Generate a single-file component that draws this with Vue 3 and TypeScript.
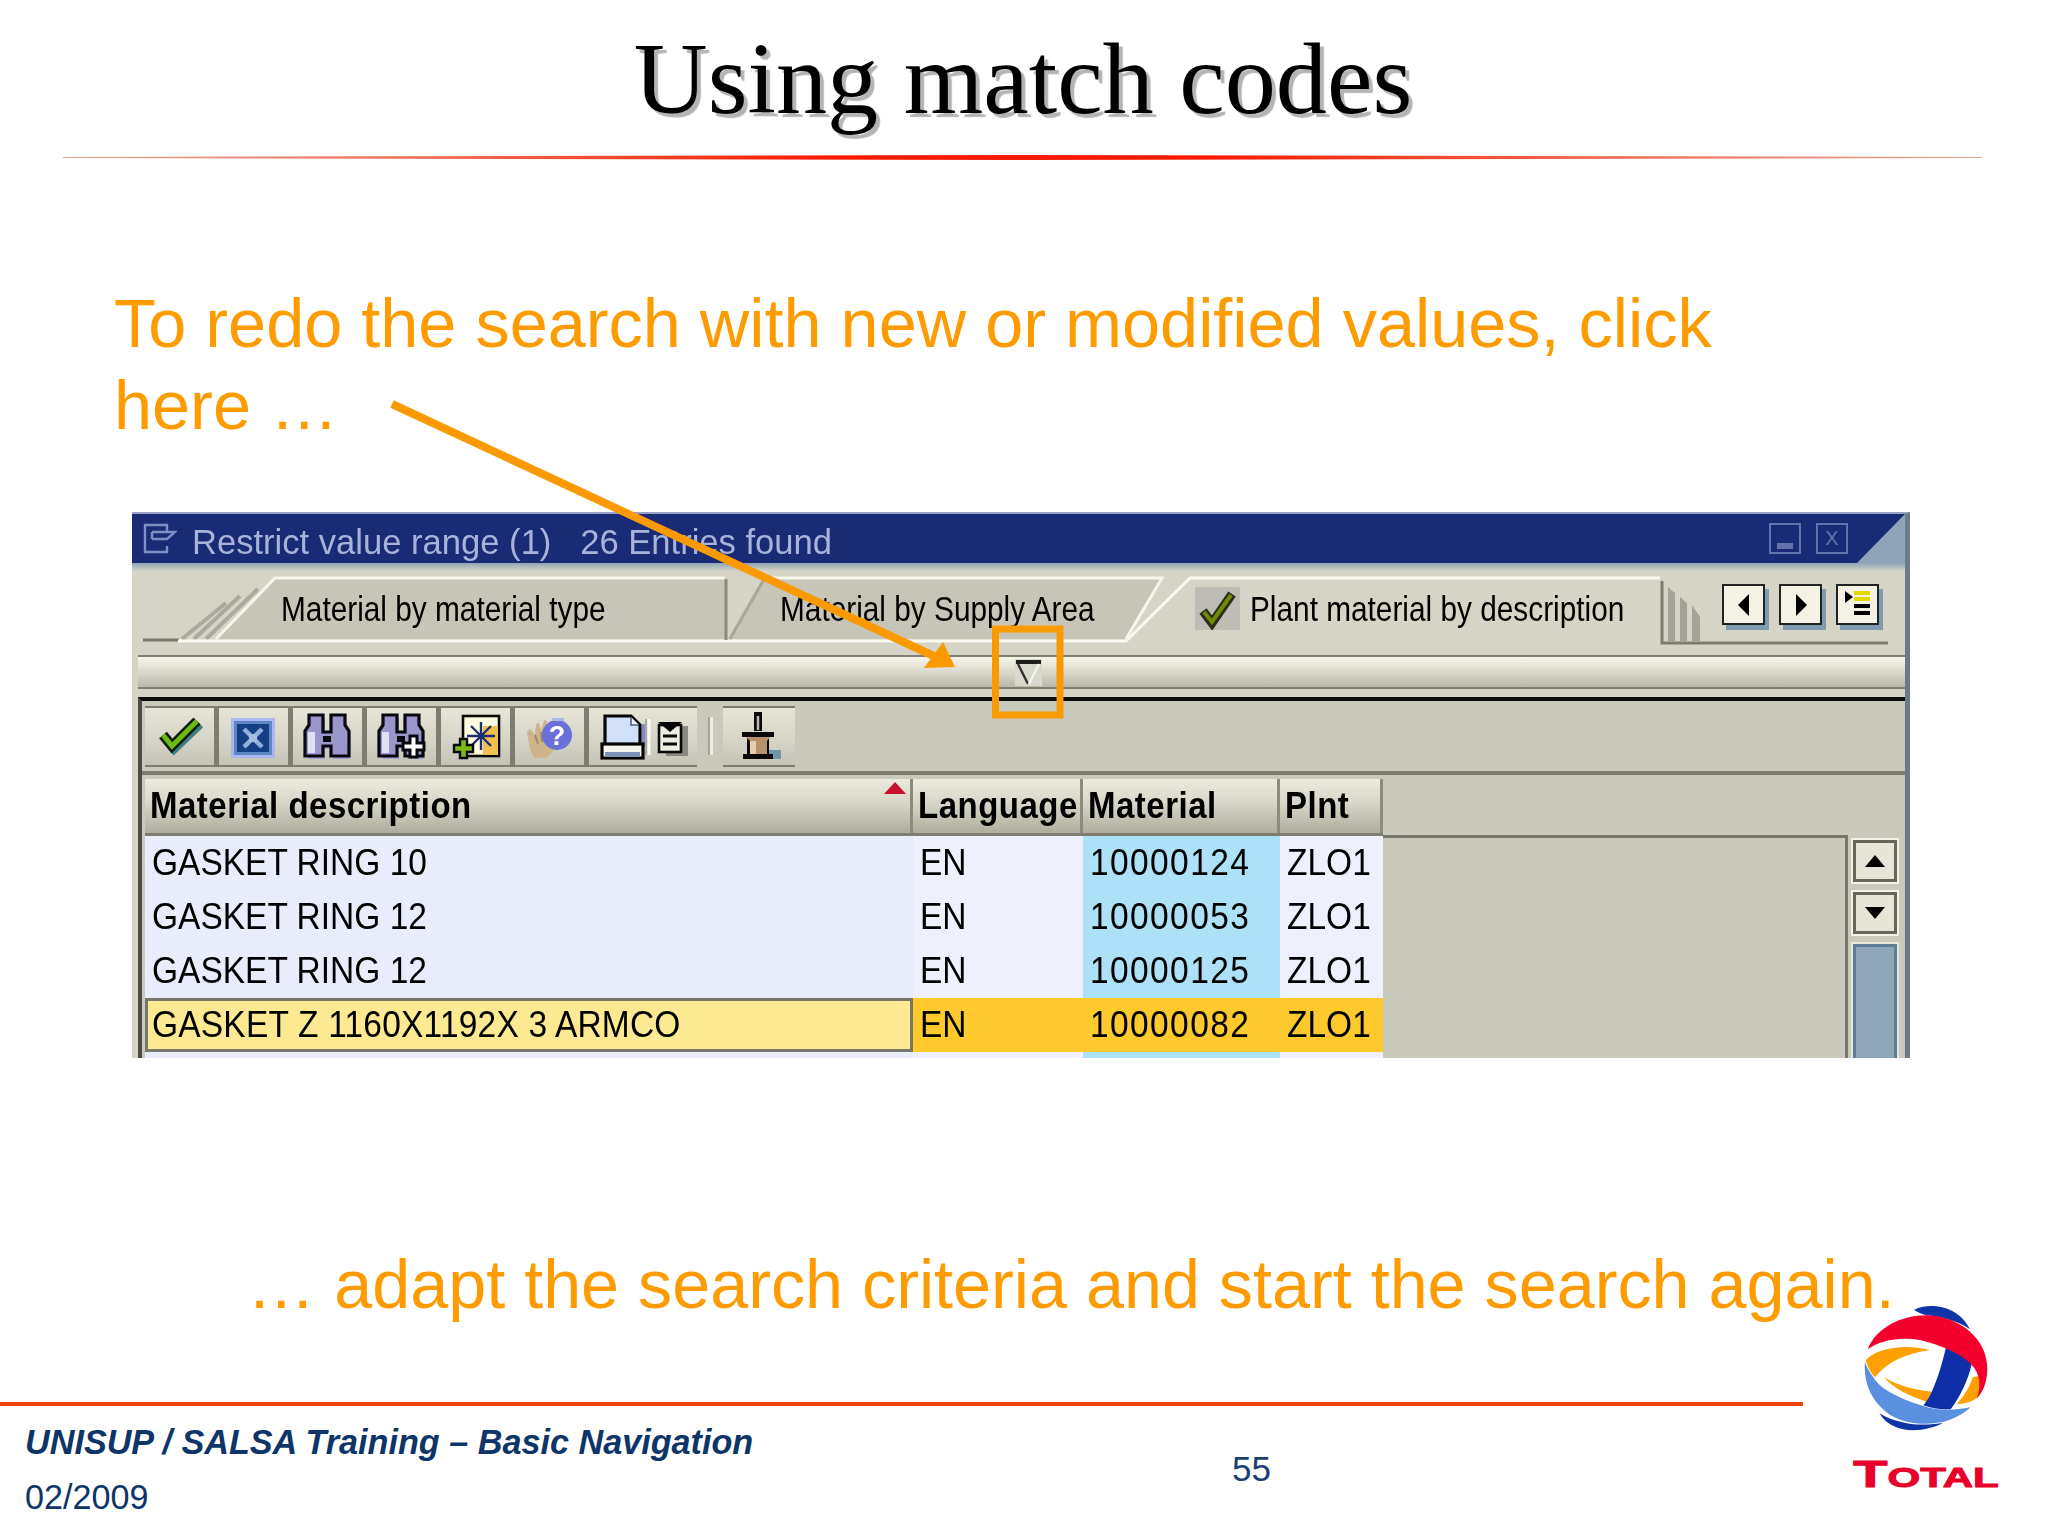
<script setup lang="ts">
interface Row {
  description: string
  language: string
  material: string
  plant: string
  selected?: boolean
}

const rows: Row[] = [
  { description: 'GASKET RING 10', language: 'EN', material: '10000124', plant: 'ZLO1' },
  { description: 'GASKET RING 12', language: 'EN', material: '10000053', plant: 'ZLO1' },
  { description: 'GASKET RING 12', language: 'EN', material: '10000125', plant: 'ZLO1' },
  { description: 'GASKET Z 1160X1192X 3 ARMCO', language: 'EN', material: '10000082', plant: 'ZLO1', selected: true },
  { description: '', language: '', material: '', plant: '' }
]
</script>

<template>
  <div class="page">
    <header class="head">
      <h1 class="title">Using match codes</h1>
      <div class="rule" />
    </header>

    <p class="lead">To redo the search with new or modified values, click<br />here …</p>

    <section class="sap">
      <div class="titlebar">
        <svg class="title-icon" width="34" height="31" viewBox="0 0 34 31">
          <path d="M24 9V2H2v27h22v-6M9 9h23l-8 7H9M9 16v-7" fill="none" stroke="#7f8fc4" stroke-width="2.4" />
        </svg>
        <span class="title-text">Restrict value range (1)&nbsp;&nbsp; 26 Entries found</span>
        <span class="win-btn"><i class="win-min" /></span>
        <span class="win-btn win-close">X</span>
      </div>

      <div class="tabs">
        <svg class="tabs-art" width="1773" height="92" viewBox="132 564 1773 92">
          <path d="M143 641h36" stroke="#77776b" stroke-width="3" />
          <g stroke="#a9a99d" stroke-width="4">
            <path d="M182 640l44-36" />
            <path d="M194 640l46-43" />
            <path d="M206 640l52-50" />
          </g>
          <path d="M216 640l59-61h450v61z" fill="#c6c5b7" />
          <path d="M728 640l35-61h399l-36 61z" fill="#c6c5b7" />
          <path d="M178 642h948l64-63h470" fill="none" stroke="#fafaf2" stroke-width="3" />
          <path d="M216 640l59-61h450M763 579h399l-36 61" fill="none" stroke="#f5f5ec" stroke-width="3" />
          <path d="M726 580v61" stroke="#8a8a7e" stroke-width="3" />
          <path d="M730 640l33-58" stroke="#a7a79b" stroke-width="3" />
          <path d="M1662 582v62h226" fill="none" stroke="#7c7c70" stroke-width="3" />
          <g fill="#a3a397">
            <path d="M1668 588l7 6v48h-7z" />
            <path d="M1680 598l7 6v38h-7z" />
            <path d="M1692 606l8 12v24h-8z" />
          </g>
        </svg>
        <div class="tab tab-first"><span class="tab-label">Material by material type</span></div>
        <div class="tab tab-second"><span class="tab-label">Material by Supply Area</span></div>
        <div class="tab tab-active">
          <svg class="tab-check" width="45" height="43" viewBox="0 0 45 43">
            <rect width="45" height="43" fill="#bdbdb6" />
            <path d="M8 24l9 12L37 7" fill="none" stroke="#2c2c18" stroke-width="9" />
            <path d="M9 25l8 10L36 8" fill="none" stroke="#6f8a06" stroke-width="4" />
          </svg>
          <span class="tab-label">Plant material by description</span>
        </div>
        <div class="tab-nav">
          <span class="nav-btn">
            <svg width="16" height="24" viewBox="0 0 16 24"><path d="M13 1v22L2 12z" /></svg>
          </span>
          <span class="nav-btn">
            <svg width="16" height="24" viewBox="0 0 16 24"><path d="M3 1v22l11-11z" /></svg>
          </span>
          <span class="nav-btn">
            <svg width="32" height="36" viewBox="0 0 32 36">
              <path d="M3 4l8 6-8 6z" />
              <rect x="12" y="4" width="16" height="4" fill="#e7d800" />
              <rect x="12" y="10" width="16" height="4" fill="#e7d800" />
              <rect x="12" y="17" width="16" height="4" />
              <rect x="12" y="24" width="16" height="4" />
            </svg>
          </span>
        </div>
      </div>

      <div class="filter-strip">
        <svg width="27" height="27" viewBox="0 0 27 27">
          <rect width="27" height="27" fill="#d8d8cc" />
          <path d="M1 3h25" stroke="#1d1d1a" stroke-width="4" />
          <path d="M3 5l10 20" stroke="#303030" stroke-width="2.4" />
          <path d="M24 5L14 25" stroke="#f6f6f0" stroke-width="2.4" />
        </svg>
      </div>

      <div class="inner">
        <div class="toolbar">
          <div class="tool-group">
            <button class="tool">
              <svg width="69" height="59" viewBox="0 0 69 59">
                <path d="M20 30l9 11L55 16" fill="none" stroke="#3b7f87" stroke-width="9" />
                <path d="M18 27l9 11 25-25" fill="none" stroke="#0f1d08" stroke-width="10" />
                <path d="M18 27l9 11 25-25" fill="none" stroke="#6cbb12" stroke-width="5" />
              </svg>
            </button>
            <button class="tool">
              <svg width="69" height="59" viewBox="0 0 69 59">
                <rect x="12" y="10" width="44" height="40" fill="#a9b8ee" />
                <rect x="15" y="13" width="38" height="34" fill="#5f86c4" />
                <rect x="18" y="16" width="32" height="28" fill="#143f82" />
                <path d="M25 21l18 18M43 21L25 39" stroke="#8fb0dc" stroke-width="4.5" />
                <rect x="30" y="26" width="8" height="8" fill="#a3bde0" />
              </svg>
            </button>
            <button class="tool">
              <svg width="69" height="59" viewBox="0 0 69 59">
                <path d="M19 10h13v17h8V10h13v10l4 6v25H40V41h-8v10H15V26l4-6z" fill="#a8a5d8" />
                <path d="M16 7h14v17h8V7h14v10l4 6v25H38V38h-8v10H12V23l4-6z" fill="#9a96cc" stroke="#08080e" stroke-width="3.2" />
                <path d="M15 24h7v21h-7z" fill="#e2e0f4" />
                <path d="M30 28h8v6h-8z" fill="#08080e" />
              </svg>
            </button>
            <button class="tool">
              <svg width="69" height="59" viewBox="0 0 69 59">
                <path d="M19 10h13v17h8V10h13v10l4 6v25H40V41h-8v10H15V26l4-6z" fill="#a8a5d8" />
                <path d="M16 7h14v17h8V7h14v10l4 6v25H38V38h-8v10H12V23l4-6z" fill="#9a96cc" stroke="#08080e" stroke-width="3.2" />
                <path d="M15 24h7v21h-7z" fill="#e2e0f4" />
                <path d="M30 28h8v6h-8z" fill="#08080e" />
                <path d="M43 28h7v7h7v7h-7v7h-7v-7h-7v-7h7z" fill="#fff" stroke="#08080e" stroke-width="3" />
              </svg>
            </button>
            <button class="tool">
              <svg width="69" height="59" viewBox="0 0 69 59">
                <rect x="22" y="8" width="36" height="40" fill="#fffbe0" stroke="#0a0a0a" stroke-width="2.6" />
                <rect x="42" y="18" width="15" height="29" fill="#f2c04e" />
                <path d="M30 18l20 20M50 18L30 38M40 14v28M26 28h28" stroke="#1f2f6f" stroke-width="2.4" />
                <path d="M19 31h7v6h6v7h-6v6h-7v-6h-6v-7h6z" fill="#7fb61a" stroke="#0a0a0a" stroke-width="2.4" />
              </svg>
            </button>
            <button class="tool">
              <svg width="69" height="59" viewBox="0 0 69 59">
                <path d="M12 24l3-3 5 6 1-11 3-1 2 8 3-11 3 1-1 9 7-3 2 22-8 9H20l-5-8z" fill="#cdb48a" />
                <path d="M20 27l3 9M26 24l1 10" stroke="#9f8a68" stroke-width="2" />
                <circle cx="42" cy="27" r="15" fill="#6b6fd8" />
                <path d="M37 10h12v3H37z" fill="#a9b8e8" />
                <text x="42" y="37" class="help-mark">?</text>
              </svg>
            </button>
            <button class="tool tool-wide">
              <svg width="108" height="59" viewBox="0 0 108 59">
                <path d="M53 16h4v22h-4z" fill="#8288c8" />
                <path d="M16 8h26l9 9v20H16z" fill="#cfe0f8" stroke="#050505" stroke-width="3.2" />
                <path d="M42 9v8h8" fill="#f3f7ff" stroke="#4a5a78" stroke-width="1.6" />
                <rect x="13" y="36" width="41" height="14" fill="#f6f6ee" stroke="#050505" stroke-width="3.2" />
                <rect x="16" y="44" width="35" height="5" fill="#7f92b8" />
                <path d="M60 11v36" stroke="#fafaf4" stroke-width="3" />
                <path d="M57 11v36" stroke="#a8a89c" stroke-width="2" />
                <rect x="77" y="18" width="22" height="30" fill="#8a8a7e" />
                <rect x="70" y="17" width="22" height="27" fill="#efeee2" stroke="#0a0a0a" stroke-width="2.6" />
                <path d="M69 14h24l-12 10z" fill="#050505" />
                <path d="M74 28h14M74 36h14" stroke="#0a0a0a" stroke-width="3" />
              </svg>
            </button>
          </div>
          <span class="tool-sep" />
          <div class="tool-group">
            <button class="tool tool-last">
              <svg width="72" height="59" viewBox="0 0 72 59">
                <rect x="46" y="42" width="12" height="9" fill="#6f96a8" />
                <path d="M35 4v19" stroke="#0a0a0a" stroke-width="8" />
                <path d="M35 8v14" stroke="#b9b9ad" stroke-width="2.5" />
                <path d="M19 24h32v5h-5v17h4v5H20v-5h4V29h-5z" fill="#0a0a0a" />
                <path d="M23 29h24l-3 4v13H27V33z" fill="#b8916a" />
                <path d="M27 33h6v13h-6z" fill="#e6cfae" />
              </svg>
            </button>
          </div>
        </div>

        <div class="list-area">
          <div class="table">
            <div class="thead">
              <div class="th th-sorted"><span class="tall">Material description</span><i class="sort-mark" /></div>
              <div class="th"><span class="tall">Language</span></div>
              <div class="th"><span class="tall">Material</span></div>
              <div class="th"><span class="tall">Plnt</span></div>
            </div>
            <div v-for="(row, i) in rows" :key="i" class="tr" :class="{ selected: row.selected }">
              <div class="td td-desc"><span class="tall">{{ row.description }}</span></div>
              <div class="td"><span class="tall">{{ row.language }}</span></div>
              <div class="td td-key"><span class="tall">{{ row.material }}</span></div>
              <div class="td"><span class="tall">{{ row.plant }}</span></div>
            </div>
          </div>
          <div class="filler" />
          <div class="scrollbar">
            <span class="scroll-btn"><svg width="22" height="14" viewBox="0 0 22 14"><path d="M11 1l10 12H1z" /></svg></span>
            <span class="scroll-btn"><svg width="22" height="14" viewBox="0 0 22 14"><path d="M1 1h20L11 13z" /></svg></span>
            <span class="scroll-track" />
          </div>
        </div>
      </div>
    </section>

    <p class="closing">… adapt the search criteria and start the search again.</p>

    <footer class="foot">
      <div class="foot-line" />
      <div class="foot-row">
        <div class="foot-text">
          <div class="foot-course">UNISUP / SALSA Training – Basic Navigation</div>
          <div class="foot-date">02/2009</div>
        </div>
        <div class="foot-page">55</div>
      </div>
    </footer>

    <!-- arrow and marker drawn over the screenshot -->
    <svg class="callout" width="2048" height="1536" viewBox="0 0 2048 1536">
      <path d="M392 404L938 658" stroke="#fb9a00" stroke-width="8" />
      <path d="M955 667l-31 1 19-26z" fill="#fb9a00" />
      <rect x="995.5" y="629" width="64.5" height="86" fill="none" stroke="#f99b00" stroke-width="7" />
    </svg>

    <svg class="logo" width="268" height="246" viewBox="0 0 804 738">
      <path d="M402 60C440 38 532 40 570 118 540 95 480 78 440 76 425 72 412 66 402 60z" fill="#0e34a6" />
      <path d="M298 370c22 15 62 28 102 33 40 2 70-1 90-5-50 27-150 42-192-28z" fill="#0e34a6" />
      <path d="M258 210c32-35 112-50 192-30-70 10-130 35-165 82-15-17-25-37-27-52z" fill="#fda000" />
      <path d="M312 262c38 23 88 38 143 43l-15 30c-50-15-100-40-128-73z" fill="#fda000" />
      <path d="M597 258c13 32 3 62-7 67-20 13-40 17-60 17 25-27 40-52 48-80z" fill="#fda000" />
      <path d="M498 172c27 8 57 23 77 50-10 48-35 98-63 136-32 2-57-3-82-12 25-26 50-96 68-174z" fill="#0f2fa8" />
      <path d="M255 215c-5 55 15 125 85 165 60 30 140 25 180 5 25-10 40-23 52-33-52 10-102 10-142-4-60-18-130-48-150-86-12-17-22-34-25-47z" fill="#5b90e0" />
      <path d="M263 178c27-68 107-103 177-102 100 2 185 74 182 164-2 40-12 65-32 85 15-35 10-75-15-100-30-35-95-60-155-75-60-10-120 0-157 28z" fill="#f5002c" />
      <text class="logo-word" x="660" y="592" textLength="436" lengthAdjust="spacingAndGlyphs" transform="translate(-440 0)"><tspan class="logo-cap">T</tspan>OTAL</text>
    </svg>
  </div>
</template>

<style scoped>
.page {
  position: relative;
  width: 2048px;
  height: 1536px;
  overflow: hidden;
  background: #fff;
  font-family: "Liberation Sans", Arial, sans-serif;
}

.head {
  padding-top: 14px;
}

.title {
  margin: 0;
  font-family: "Liberation Serif", "Times New Roman", serif;
  font-size: 102.3px;
  font-weight: 400;
  line-height: 130px;
  text-align: center;
  color: #000;
  text-shadow: 4px 4px 1px #b4b4b4;
  padding-right: 2px;
}

.rule {
  height: 5px;
  margin: 11px 66px 0 63px;
  background: linear-gradient(90deg, #e0a898 0%, #f06a50 20%, #f51a00 40%, #f51a00 60%, #f06a50 80%, #e0a898 100%);
  clip-path: polygon(0 40%, 50% 0, 100% 40%, 100% 60%, 50% 100%, 0 60%);
}

.lead,
.closing {
  margin: 0;
  color: #fd9b00;
}

.lead {
  padding-left: 114px;
  margin-top: 123px;
  font-size: 68.45px;
  line-height: 82px;
}

.sap {
  width: 1778px;
  height: 546px;
  margin: 65px 0 0 132px;
  overflow: hidden;
  background: #d5d4c6;
  border-top: 2px solid #9aa0c8;
  border-right: 5px solid #6c7c86;
  box-sizing: border-box;
  font-size: 32px;
  color: #000;
  filter: blur(0.5px);
}

.titlebar {
  position: relative;
  display: flex;
  align-items: center;
  height: 49px;
  padding-left: 11px;
  background: #1a2b75;
  color: #a9b3d9;
}

.titlebar::after {
  content: "";
  position: absolute;
  right: 0;
  bottom: 0;
  width: 48px;
  height: 49px;
  background: #8fa4b6;
  clip-path: polygon(100% 0, 100% 100%, 0 100%);
}

.title-icon {
  margin-right: 15px;
}

.title-text {
  flex: 1;
  margin-top: 8px;
  font-size: 34.6px;
}

.win-btn {
  display: flex;
  align-items: flex-end;
  justify-content: center;
  width: 32px;
  height: 31px;
  margin-right: 15px;
  box-sizing: border-box;
  border: 2px solid #6373ac;
  font-size: 20px;
  color: #6373ac;
}

.win-close {
  align-items: center;
  margin-right: 57px;
}

.win-min {
  width: 16px;
  height: 6px;
  margin-bottom: 3px;
  background: #6373ac;
}

.tabs {
  position: relative;
  display: flex;
  height: 92px;
  background: linear-gradient(#8fa4b6 0, #d5d4c6 8px);
}

.tabs-art {
  position: absolute;
  left: 0;
  top: 0;
}

.tab {
  position: relative;
  display: flex;
  align-items: center;
  flex: none;
  height: 61px;
  margin-top: 15px;
  box-sizing: border-box;
}

.tab-label {
  font-size: 29.8px;
  transform: scaleY(1.2);
  white-space: nowrap;
}

.tab-first {
  width: 648px;
  padding-left: 149px;
}

.tab-second {
  width: 415px;
}

.tab-active {
  width: 527px;
}

.tab-check {
  margin-right: 10px;
}

.tab-nav {
  position: relative;
  display: flex;
  flex: none;
  gap: 14px;
  height: 42px;
  margin-top: 21px;
}

.nav-btn {
  display: flex;
  align-items: center;
  justify-content: center;
  width: 43px;
  height: 41px;
  box-sizing: border-box;
  background: #f3f2e4;
  border: 2px solid #222;
  box-shadow: 4px 5px 0 #7f9bb0;
}

.filter-strip {
  display: flex;
  align-items: center;
  justify-content: flex-start;
  height: 34px;
  margin-left: 6px;
  padding-left: 877px;
  box-sizing: border-box;
  border-top: 2px solid #7f7f72;
  border-bottom: 2px solid #7f7f72;
  background: linear-gradient(#f6f5ea, #e9e8db 25%, #b9b8a9 100%);
}

.inner {
  height: 361px;
  margin: 8px 0 0 6px;
  border-top: 4px solid #0b0b0b;
  border-left: 4px solid #4b4b44;
  background: #cacabc;
  overflow: hidden;
}

.toolbar {
  display: flex;
  align-items: center;
  height: 74px;
  padding-left: 3px;
  box-sizing: border-box;
  border-bottom: 4px solid #7e7e70;
}

.tool-group {
  display: flex;
  gap: 5px;
  padding: 2px 0 2px;
  background: #7d7d70;
}

.tool {
  display: block;
  width: 69px;
  height: 57px;
  padding: 0;
  overflow: hidden;
  border: 0;
  background: linear-gradient(#e6e5d8, #d4d3c5 60%, #c4c3b4);
}

.tool-wide {
  width: 108px;
}

.tool-last {
  width: 72px;
}

.tool-sep {
  width: 3px;
  height: 38px;
  margin: 0 10px 0 11px;
  background: #eeeee4;
  border-left: 2px solid #a3a397;
}

.help-mark {
  font-family: "Liberation Sans", Arial, sans-serif;
  font-size: 27px;
  font-weight: 700;
  fill: #fff;
  text-anchor: middle;
}

.list-area {
  display: flex;
  margin-top: 4px;
  padding-left: 3px;
}

.table {
  width: 1238px;
  flex: none;
}

.thead,
.tr {
  display: grid;
  grid-template-columns: 768px 170px 197px 103px;
}

.thead {
  height: 57px;
  border-bottom: 3px solid #7e7e70;
  box-sizing: border-box;
}

.th {
  position: relative;
  display: flex;
  align-items: center;
  padding-left: 5px;
  box-sizing: border-box;
  border-right: 3px solid #8b8b7e;
  background: linear-gradient(#ecebde, #d6d5c7 45%, #aeae9e);
  font-size: 33px;
  font-weight: 700;
  white-space: nowrap;
  letter-spacing: 0.5px;
}

.tall {
  display: inline-block;
  transform: scaleY(1.1);
}

.sort-mark {
  position: absolute;
  right: 4px;
  top: 3px;
  border-left: 11px solid transparent;
  border-right: 11px solid transparent;
  border-bottom: 12px solid #c8102e;
}

.tr {
  height: 54px;
  font-size: 33.5px;
}

.td {
  display: flex;
  align-items: center;
  padding-left: 7px;
  background: #eef0fb;
  white-space: nowrap;
  box-sizing: border-box;
}

.td-desc {
  background: #e9edfb;
}

.td-key {
  background: #ade1f8;
  letter-spacing: 1.4px;
}

.selected .td {
  background: #fdc92d;
}

.selected .td-desc {
  background: #fde992;
  border: 3px solid #77776a;
  padding-left: 4px;
  letter-spacing: 0.2px;
}

.filler {
  width: 462px;
  height: 400px;
  margin-top: 56px;
  border-top: 3px solid #77776a;
  border-right: 3px solid #77776a;
  flex: none;
}

.scrollbar {
  display: flex;
  flex-direction: column;
  gap: 10px;
  margin: 61px 0 0 5px;
}

.scroll-btn {
  display: flex;
  align-items: center;
  justify-content: center;
  width: 44px;
  height: 42px;
  box-sizing: border-box;
  background: #e6e5d8;
  border: 3px solid #66665a;
  outline: 2px solid #f3f2e8;
}

.scroll-track {
  width: 44px;
  height: 200px;
  box-sizing: border-box;
  background: #8ea7b8;
  border: 3px solid #5d7f96;
  outline: 2px solid #e8e8dc;
}

.closing {
  margin-top: 188px;
  padding-left: 247px;
  font-size: 68.3px;
  line-height: 76px;
}

.foot {
  margin-top: 80px;
}

.foot-line {
  width: 1803px;
  height: 4px;
  background: #ee4510;
}

.foot-row {
  display: flex;
}

.foot-text {
  width: 1232px;
  box-sizing: border-box;
  padding: 9px 0 0 25px;
  font-size: 34.2px;
  line-height: 55px;
  color: #0d3568;
}

.foot-course {
  font-weight: 700;
  font-style: italic;
}

.foot-page {
  margin-top: 35px;
  font-size: 35px;
  line-height: 55px;
  color: #1c3f73;
}

.callout {
  position: absolute;
  left: 0;
  top: 0;
  pointer-events: none;
}

.logo {
  position: absolute;
  left: 1780px;
  top: 1290px;
}

.logo-word {
  font-family: "Liberation Sans", Arial, sans-serif;
  font-size: 84px;
  font-weight: 700;
  fill: #e8002a;
  stroke: #e8002a;
  stroke-width: 3px;
}

.logo-cap {
  font-size: 112px;
}
</style>

<style>
html,
body {
  background: #fff;
}
</style>
